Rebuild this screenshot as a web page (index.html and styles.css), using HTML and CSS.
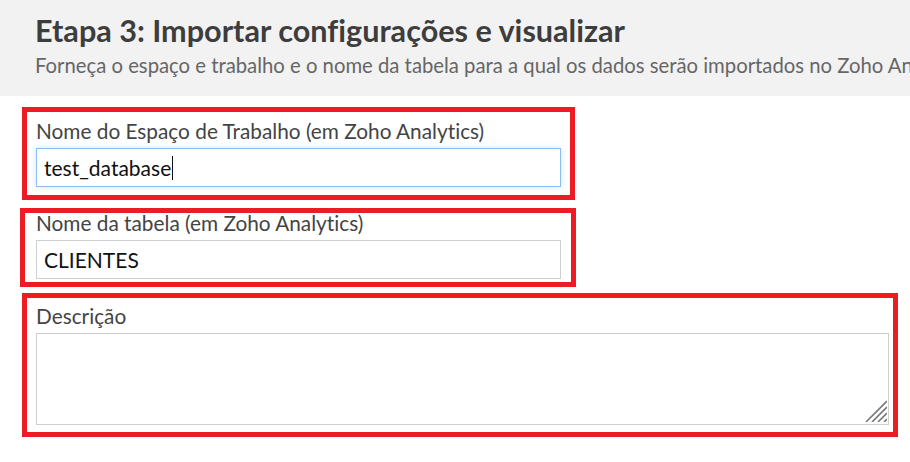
FILE: index.html
```html
<!DOCTYPE html>
<html lang="pt-BR">
<head>
    <meta charset="UTF-8">
    <meta name="viewport" content="width=device-width, initial-scale=1.0">
    <title>Importar configurações</title>
    <link rel="stylesheet" href="styles.css">
</head>
<body>

    <div class="step-header">
        <h1>Etapa 3: Importar configurações e visualizar</h1>
        <p>Forneça o espaço e trabalho e o nome da tabela para a qual os dados serão importados no Zoho Analytics</p>
    </div>

    <div class="form">
        <div class="mark mark-workspace">
            <label>Nome do Espaço de Trabalho (em Zoho Analytics)</label>
            <div class="text-input focused">test_database<span class="caret"></span></div>
        </div>

        <div class="mark mark-table">
            <label>Nome da tabela (em Zoho Analytics)</label>
            <div class="text-input">CLIENTES</div>
        </div>

        <div class="mark mark-desc">
            <label>Descrição</label>
            <div class="textarea-wrap">
                <textarea></textarea>
                <svg class="grip" width="22" height="22" viewBox="0 0 22 22">
                    <path d="M1 22 L22 1 M7 22 L22 7 M13 22 L22 13 M19 22 L22 19" stroke="#777" stroke-width="1.6" fill="none"/>
                </svg>
            </div>
        </div>
    </div>

</body>
</html>
```

FILE: styles.css
```css
body {
    font-family: "Lato", "Liberation Sans", sans-serif;
    font-variant-ligatures: none;
    background: #fff;
    color: #444;
    margin: 0;
    padding: 0;
}

.step-header {
    background: #f2f2f2;
    height: 96px;
    box-sizing: border-box;
    padding: 13px 0 0 35px;
    white-space: nowrap;
    overflow: hidden;
}

.step-header h1 {
    margin: 0;
    font-size: 30.6px;
    line-height: 36px;
    font-weight: 700;
    color: #3d3d3d;
}

.step-header p {
    margin: 4px 0 0;
    font-size: 20.3px;
    line-height: 24px;
    color: #666;
}

.mark {
    border: 5px solid #ed1c24;
    box-sizing: border-box;
}

.mark label {
    display: block;
    font-size: 20.8px;
    line-height: 20px;
    color: #444;
    margin-bottom: 7px;
}

.mark-workspace {
    margin: 11px 0 0 22px;
    width: 553px;
    height: 93px;
    padding: 9px 9px 0 9px;
}

.mark-table {
    margin: 8px 0 0 20px;
    width: 556px;
    height: 79px;
    padding: 0 10px 0 11px;
}

.mark-desc {
    margin: 6px 0 0 22px;
    width: 876px;
    height: 144px;
    padding: 8px 4px 0 9px;
}

.mark-desc label {
    margin-bottom: 7px;
}

.text-input {
    height: 39px;
    box-sizing: border-box;
    border: 1px solid #cfcfcf;
    background: #fff;
    padding: 0 7px;
    font-size: 21px;
    line-height: 36px;
    color: #111;
    display: flex;
    align-items: center;
}

.text-input.focused {
    border-color: #8cbfee;
    box-shadow: 0 0 6px rgba(120, 180, 240, 0.35);
}

.caret {
    display: inline-block;
    width: 1px;
    height: 24px;
    background: #111;
    margin-left: 1px;
}

.textarea-wrap {
    position: relative;
    height: 92px;
}

textarea {
    display: block;
    width: 100%;
    height: 92px;
    box-sizing: border-box;
    border: 1px solid #cfcfcf;
    resize: none;
    outline: none;
    font-family: inherit;
    font-size: 16px;
}

.grip {
    position: absolute;
    right: 2px;
    bottom: 3px;
}
```
